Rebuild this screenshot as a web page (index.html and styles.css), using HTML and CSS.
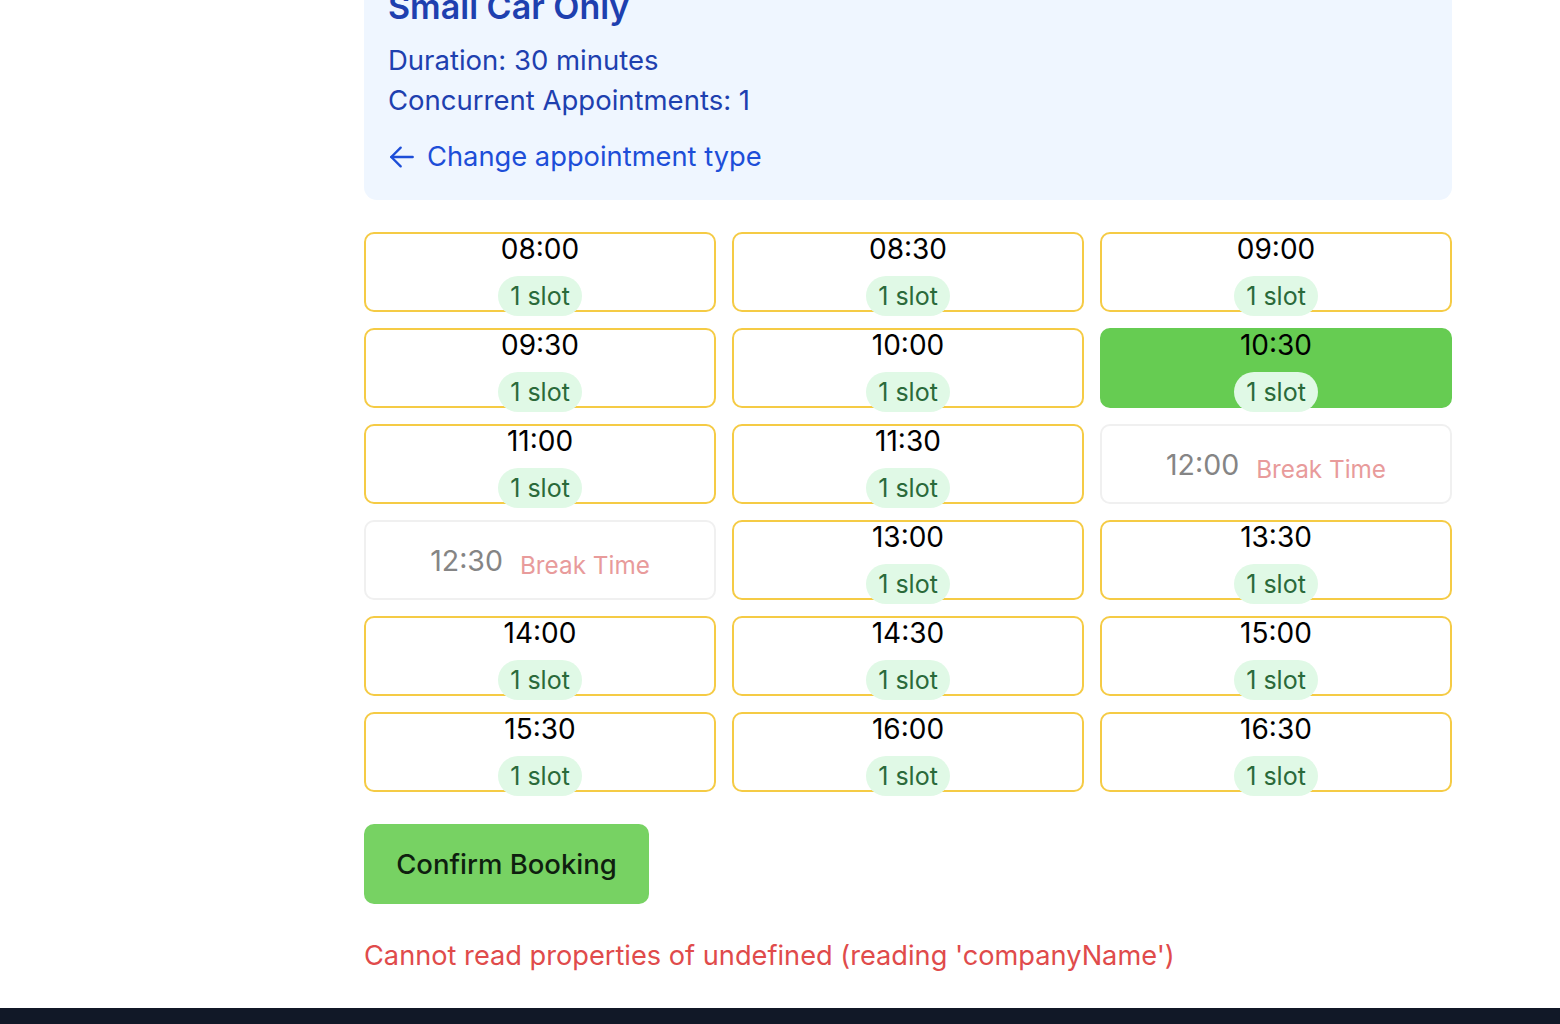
FILE: index.html
```html
<!DOCTYPE html>
<html lang="en">
<head>
<meta charset="utf-8">
<title>Booking</title>
<link rel="stylesheet" href="styles.css">
</head>
<body>
<main class="page">
  <section class="type-card">
    <h2 class="type-title">Small Car Only</h2>
    <p class="type-line">Duration: 30 minutes</p>
    <p class="type-line">Concurrent Appointments: 1</p>
    <a class="back-link" href="#">
      <svg class="back-icon" viewBox="0 0 24 24" width="32" height="32" fill="none" stroke="currentColor" stroke-width="1.8" stroke-linecap="round" stroke-linejoin="round"><path d="M20 12H4"/><path d="M11 19l-7-7 7-7"/></svg>
      <span>Change appointment type</span>
    </a>
  </section>

  <div class="slots">
    <div class="slot"><div class="slot-time">08:00</div><div class="slot-badge">1 slot</div></div>
    <div class="slot"><div class="slot-time">08:30</div><div class="slot-badge">1 slot</div></div>
    <div class="slot"><div class="slot-time">09:00</div><div class="slot-badge">1 slot</div></div>
    <div class="slot"><div class="slot-time">09:30</div><div class="slot-badge">1 slot</div></div>
    <div class="slot"><div class="slot-time">10:00</div><div class="slot-badge">1 slot</div></div>
    <div class="slot slot-selected"><div class="slot-time">10:30</div><div class="slot-badge">1 slot</div></div>
    <div class="slot"><div class="slot-time">11:00</div><div class="slot-badge">1 slot</div></div>
    <div class="slot"><div class="slot-time">11:30</div><div class="slot-badge">1 slot</div></div>
    <div class="slot slot-break"><span class="break-time">12:00</span><span class="break-label">Break Time</span></div>
    <div class="slot slot-break"><span class="break-time">12:30</span><span class="break-label">Break Time</span></div>
    <div class="slot"><div class="slot-time">13:00</div><div class="slot-badge">1 slot</div></div>
    <div class="slot"><div class="slot-time">13:30</div><div class="slot-badge">1 slot</div></div>
    <div class="slot"><div class="slot-time">14:00</div><div class="slot-badge">1 slot</div></div>
    <div class="slot"><div class="slot-time">14:30</div><div class="slot-badge">1 slot</div></div>
    <div class="slot"><div class="slot-time">15:00</div><div class="slot-badge">1 slot</div></div>
    <div class="slot"><div class="slot-time">15:30</div><div class="slot-badge">1 slot</div></div>
    <div class="slot"><div class="slot-time">16:00</div><div class="slot-badge">1 slot</div></div>
    <div class="slot"><div class="slot-time">16:30</div><div class="slot-badge">1 slot</div></div>
  </div>

  <button class="confirm" type="button">Confirm Booking</button>
  <p class="error">Cannot read properties of undefined (reading 'companyName')</p>
</main>
<footer class="footer"></footer>
</body>
</html>
```

FILE: styles.css
```css
* { box-sizing: border-box; }
html, body { margin: 0; padding: 0; }
body {
  font-family: Inter, "Noto Sans", "Liberation Sans", sans-serif;
  background: #ffffff;
  color: #000;
  overflow: hidden;
}
.page {
  width: 1452px;
  padding-left: 364px;
  margin-top: -53px;
}
.type-card {
  background: #eff6ff;
  border-radius: 13px;
  padding: 40px 24px 23px;
}
.type-title {
  margin: 0 0 13px;
  font-size: 34px;
  line-height: 40px;
  font-weight: 600;
  color: #1e40af;
}
.type-line {
  margin: 0;
  font-size: 27.5px;
  line-height: 40px;
  color: #1e40af;
}
.back-link {
  margin-top: 17px;
  display: flex;
  align-items: center;
  gap: 9px;
  font-size: 27.3px;
  line-height: 40px;
  color: #1d4ed8;
  text-decoration: none;
}
.back-icon { display: block; margin-left: -2px; }
.slots {
  margin-top: 32px;
  display: grid;
  grid-template-columns: repeat(3, 1fr);
  gap: 16px;
}
.slot {
  height: 80px;
  border: 2px solid #f5cb45;
  border-radius: 10px;
  display: flex;
  flex-direction: column;
  align-items: center;
  background: #fff;
}
.slot-time {
  font-size: 28px;
  line-height: 30px;
  margin-top: 0;
  color: #000;
}
.slot-badge {
  margin-top: 12px;
  height: 40px;
  padding: 0 12px;
  border-radius: 20px;
  background: #e0f9e6;
  color: #2a6a3a;
  font-size: 25px;
  line-height: 40px;
}
.slot-selected {
  background: #66cc52;
  border-color: #66cc52;
}
.slot-break {
  border-color: #f0f0f0;
  flex-direction: row;
  justify-content: center;
  align-items: center;
  gap: 17px;
}
.break-time {
  font-size: 28.5px;
  color: #858585;
  margin-top: 0;
}
.break-label {
  font-size: 24.3px;
  color: #e89b9b;
  margin-top: 10px;
}
.confirm {
  margin-top: 32px;
  display: block;
  width: 285px;
  height: 80px;
  border: none;
  border-radius: 10px;
  background: #77d263;
  color: #0f1f0f;
  font-family: inherit;
  font-size: 27.5px;
  font-weight: 500;
}
.error {
  margin: 32px 0 0;
  font-size: 27.2px;
  line-height: 40px;
  color: #e04b4b;
}
.footer {
  margin-top: 32px;
  height: 40px;
  background: #111827;
}
```
